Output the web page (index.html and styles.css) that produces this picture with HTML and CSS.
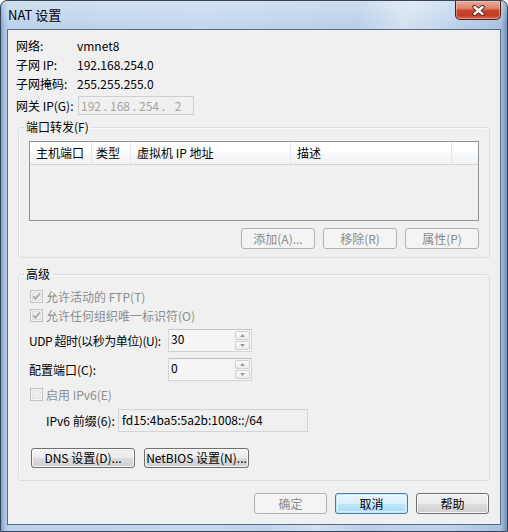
FILE: index.html
```html
<!DOCTYPE html>
<html lang="zh-CN">
<head>
<meta charset="utf-8">
<title>NAT 设置</title>
<link rel="stylesheet" href="styles.css">
</head>
<body>
<div class="window">
  <div class="titlebar">
    <span class="title">NAT 设置</span>
    <button class="close-btn" aria-label="关闭">
      <svg width="13" height="11" viewBox="0 0 13 11"><path d="M2.5 2 L10.5 9 M10.5 2 L2.5 9" stroke="#4a1a14" stroke-width="4.2" stroke-linecap="round" fill="none"/><path d="M2.5 2 L10.5 9 M10.5 2 L2.5 9" stroke="#ffffff" stroke-width="2.4" stroke-linecap="round" fill="none"/></svg>
    </button>
  </div>
  <div class="client">
    <div class="info">
      <span>网络:</span><span>vmnet8</span>
      <span>子网 IP:</span><span>192.168.254.0</span>
      <span>子网掩码:</span><span>255.255.255.0</span>
      <span class="gw-lbl">网关 IP(G):</span>
      <div class="ipbox"><span class="oct">192</span><span class="dot">.</span><span class="oct">168</span><span class="dot">.</span><span class="oct">254</span><span class="dot">.</span><span class="oct">2</span></div>
    </div>

    <fieldset class="group pf">
      <legend>端口转发(F)</legend>
      <div class="listview">
        <div class="lv-head">
          <div class="col c1">主机端口</div>
          <div class="col c2">类型</div>
          <div class="col c3">虚拟机 IP 地址</div>
          <div class="col c4">描述</div>
          <div class="col filler"></div>
        </div>
        <div class="lv-body"></div>
      </div>
      <div class="btn-row">
        <button class="btn disabled">添加(A)...</button>
        <button class="btn disabled">移除(R)</button>
        <button class="btn disabled">属性(P)</button>
      </div>
    </fieldset>

    <fieldset class="group adv">
      <legend>高级</legend>
      <div class="check disabled">
        <span class="cbox"><svg width="13" height="13" viewBox="0 0 13 13"><rect x="0.5" y="0.5" width="12" height="12" fill="#f4f4f4" stroke="#c2c2c2"/><rect x="2.5" y="2.5" width="8" height="8" fill="#ececec" stroke="#e0e0e0"/><path d="M3.2 6.4 L5.4 8.8 L9.8 3.6" stroke="#a6a6a6" stroke-width="1.7" fill="none"/></svg></span>
        <span>允许活动的 FTP(T)</span>
      </div>
      <div class="check disabled">
        <span class="cbox"><svg width="13" height="13" viewBox="0 0 13 13"><rect x="0.5" y="0.5" width="12" height="12" fill="#f4f4f4" stroke="#c2c2c2"/><rect x="2.5" y="2.5" width="8" height="8" fill="#ececec" stroke="#e0e0e0"/><path d="M3.2 6.4 L5.4 8.8 L9.8 3.6" stroke="#a6a6a6" stroke-width="1.7" fill="none"/></svg></span>
        <span>允许任何组织唯一标识符(O)</span>
      </div>
      <div class="field-row udp">
        <span class="flabel tight">UDP 超时(以秒为单位)(U):</span>
        <div class="spin">
          <span class="spin-val">30</span>
          <span class="spin-btns">
            <span class="sb"><svg width="5" height="3" viewBox="0 0 5 3"><path d="M0 3 L2.5 0 L5 3 Z" fill="#9a9a9a"/></svg></span>
            <span class="sb"><svg width="5" height="3" viewBox="0 0 5 3"><path d="M0 0 L2.5 3 L5 0 Z" fill="#9a9a9a"/></svg></span>
          </span>
        </div>
      </div>
      <div class="field-row port">
        <span class="flabel">配置端口(C):</span>
        <div class="spin">
          <span class="spin-val">0</span>
          <span class="spin-btns">
            <span class="sb"><svg width="5" height="3" viewBox="0 0 5 3"><path d="M0 3 L2.5 0 L5 3 Z" fill="#9a9a9a"/></svg></span>
            <span class="sb"><svg width="5" height="3" viewBox="0 0 5 3"><path d="M0 0 L2.5 3 L5 0 Z" fill="#9a9a9a"/></svg></span>
          </span>
        </div>
      </div>
      <div class="check disabled ipv6">
        <span class="cbox"><svg width="13" height="13" viewBox="0 0 13 13"><rect x="0.5" y="0.5" width="12" height="12" fill="#f4f4f4" stroke="#c2c2c2"/><rect x="2.5" y="2.5" width="8" height="8" fill="#ececec" stroke="#e6e6e6"/></svg></span>
        <span>启用 IPv6(E)</span>
      </div>
      <div class="prefix-row">
        <span class="plabel">IPv6 前缀(6):</span>
        <div class="textbox">fd15:4ba5:5a2b:1008::/64</div>
      </div>
      <div class="adv-btns">
        <button class="btn dns">DNS 设置(D)...</button>
        <button class="btn netbios">NetBIOS 设置(N)...</button>
      </div>
    </fieldset>

    <div class="dialog-buttons">
      <button class="btn disabled">确定</button>
      <button class="btn focused">取消</button>
      <button class="btn">帮助</button>
    </div>
  </div>
</div>
</body>
</html>
```

FILE: styles.css
```css
* { box-sizing: border-box; }
html, body { margin: 0; padding: 0; }
body {
  width: 508px;
  height: 532px;
  overflow: hidden;
  background: #ffffff;
  font-family: "Noto Sans CJK SC", "Liberation Sans", sans-serif;
  font-size: 12px;
  line-height: 16px;
  color: #000;
}

.window {
  width: 508px;
  height: 532px;
  border: 1px solid #34465c;
  border-radius: 7px 7px 0 0;
  overflow: hidden;
  display: flex;
  flex-direction: column;
  background:
    linear-gradient(to bottom, rgba(255,255,255,0.30), rgba(255,255,255,0) 26px),
    linear-gradient(100deg, rgba(255,255,255,0) 60%, rgba(255,255,255,0.35) 68%, rgba(255,255,255,0) 76%),
    linear-gradient(to right, #7f9dc3 0, #a5bfdd 3px, #bcd1ea 7px, #c3d7ee 40%, #b9cfe8 70%, #bfd4ec 88%, #a9c1de calc(100% - 6px), #6f8db5 100%);
}

.titlebar {
  height: 28px;
  flex: none;
  display: flex;
  align-items: flex-start;
  padding: 0 6px 0 7px;
}
.title {
  font-size: 13px;
  line-height: 16px;
  margin-top: 6px;
  color: #000;
}
.close-btn {
  margin-left: auto;
  width: 46px;
  height: 19px;
  padding: 0;
  border: 1px solid #4c2019;
  border-top: none;
  border-radius: 0 0 5px 5px;
  background: linear-gradient(to bottom, #e9ab9b 0%, #dd8571 40%, #c9442c 52%, #c33a20 78%, #d9694d 100%);
  box-shadow: inset 0 0 0 1px rgba(255, 210, 200, 0.45);
  display: flex;
  align-items: center;
  justify-content: center;
}

.client {
  flex: none;
  height: 496px;
  margin: 0 6px;
  border: 1px solid #566c86;
  background: #f0f0f0;
  display: flex;
  flex-direction: column;
}

/* info rows */
.info {
  display: grid;
  grid-template-columns: 61px auto;
  grid-template-rows: 19px 19px 19px 22px;
  padding: 6px 0 0 8px;
  line-height: 19px;
}
.gw-lbl { align-self: end; }
.ipbox {
  align-self: end;
  margin-left: 1px;
  width: 116px;
  height: 19px;
  border: 1px solid #ccd0d6;
  background: #f0f0f0;
  color: #a3a3a3;
  display: flex;
  align-items: center;
  line-height: 16px;
}
.oct { width: 24px; text-align: center; }
.dot { width: 5px; text-align: center; }

/* group boxes */
.group {
  margin: 0 10px;
  padding: 0 10px;
  border: 1px solid #d5dfe5;
  border-radius: 3px;
  box-shadow: inset 1px 1px 0 #fafafa;
  min-inline-size: 0;
}
.group legend {
  padding: 0 2px;
  margin-left: -5px;
  line-height: 16px;
  font-size: 12px;
}
.pf { margin-top: 4px; padding-top: 6px; padding-bottom: 8px; }
.adv { margin-top: 8px; padding-top: 5px; padding-bottom: 12px; }

/* list view */
.listview {
  height: 80px;
  border: 1px solid #8e939b;
  background: #f0f0f0;
}
.lv-head {
  display: flex;
  height: 23px;
  background: linear-gradient(to bottom, #ffffff 0%, #ffffff 45%, #f7f8f9 55%, #f2f3f5 100%);
  border-bottom: 1px solid #d5d5d5;
}
.col {
  height: 22px;
  border-right: 1px solid #e3e6ea;
  padding-left: 6px;
  line-height: 22px;
  white-space: nowrap;
}
.c1 { width: 62px; }
.c2 { width: 39px; padding-left: 4px; }
.c3 { width: 160px; }
.c4 { width: 161px; }
.filler { flex: 1; border-right: none; }

.btn-row {
  margin-top: 7px;
  display: flex;
  justify-content: flex-end;
  gap: 8px;
}
.btn-row .btn { width: 74px; }

/* buttons */
.btn {
  height: 21px;
  padding: 0;
  font-family: inherit;
  font-size: 12px;
  line-height: 16px;
  color: #000;
  white-space: nowrap;
  border: 1px solid #707070;
  border-radius: 3px;
  background: linear-gradient(to bottom, #f2f2f2 0%, #ebebeb 50%, #dddddd 51%, #cfcfcf 100%);
  box-shadow: inset 0 0 0 1px rgba(255,255,255,0.75);
}
.btn.disabled {
  color: #8a8a8a;
  border-color: #adb2b5;
  background: #f4f4f4;
  box-shadow: none;
}
.btn.focused {
  border-color: #3c7fb1;
  background: linear-gradient(to bottom, #eaf6fd 0%, #d9f0fc 50%, #bee6fd 51%, #a7d9f5 100%);
  box-shadow: inset 0 0 0 1px #c6e6f7, inset 0 0 0 2px rgba(255,255,255,0.5);
}

/* advanced */
.check {
  display: flex;
  align-items: center;
  height: 19px;
  line-height: 19px;
  white-space: nowrap;
}
.check.disabled { color: #8d8d8d; }
.cbox {
  width: 13px;
  height: 13px;
  margin-left: 1px;
  margin-right: 3px;
  display: flex;
}
.field-row {
  display: flex;
  align-items: center;
}
.udp { margin-top: 4px; }
.port { margin-top: 6px; }
.flabel {
  flex: none;
  width: 139px;
  line-height: 19px;
  white-space: nowrap;
}
.flabel.tight { letter-spacing: -0.45px; }
.spin {
  flex: none;
  width: 84px;
  height: 23px;
  border: 1px solid #d2d4d8;
  border-top-color: #bfc3c8;
  background: #f5f5f5;
  display: flex;
  align-items: flex-start;
}
.spin-val { padding-left: 2px; line-height: 18px; }
.spin-btns {
  margin-left: auto;
  width: 17px;
  height: 21px;
  padding: 1px;
  display: flex;
  flex-direction: column;
  gap: 1px;
}
.sb {
  flex: 1;
  border: 1px solid #cfcfcf;
  border-radius: 2px;
  background: linear-gradient(to bottom, #fafafa, #ececec);
  display: flex;
  align-items: center;
  justify-content: center;
}
.ipv6 { margin-top: 4px; }
.prefix-row {
  margin-top: 5px;
  display: flex;
  align-items: center;
  padding-left: 17px;
}
.plabel { flex: none; width: 72px; line-height: 19px; white-space: nowrap; }
.textbox {
  width: 190px;
  height: 23px;
  border: 1px solid #d2d4d8;
  background: #f0f0f0;
  padding-left: 3px;
  line-height: 20px;
  white-space: nowrap;
}
.adv-btns {
  margin-top: 16px;
  padding-left: 2px;
  display: flex;
  gap: 9px;
}
.adv-btns .btn { height: 20px; }
.dns { width: 104px; }
.netbios { width: 105px; }

.dialog-buttons {
  margin-top: 12px;
  padding-right: 11px;
  display: flex;
  justify-content: flex-end;
  gap: 8px;
}
.dialog-buttons .btn { width: 73px; }
```
